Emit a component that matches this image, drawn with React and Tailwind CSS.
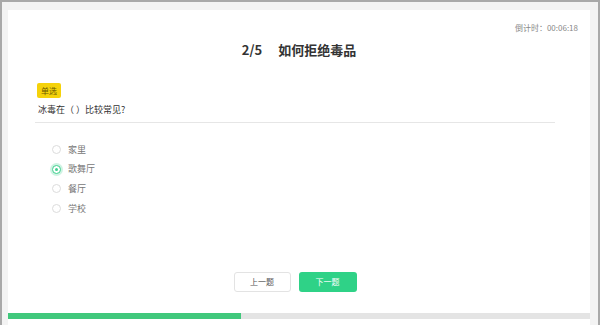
import React from "react";

const font = { fontFamily: '"Noto Sans CJK SC", "Noto Sans", sans-serif' };

function Radio({ checked }) {
  return checked ? (
    <span className="flex h-[9px] w-[9px] items-center justify-center rounded-full border border-[#3fcf8e] bg-white shadow-[0_0_0_2px_rgba(63,207,142,0.25)]">
      <span className="h-[3px] w-[3px] rounded-full bg-[#3fcf8e]" />
    </span>
  ) : (
    <span className="h-[9px] w-[9px] rounded-full border border-[#dcdcdc] bg-white" />
  );
}

export default function App() {
  const options = [
    { label: "家里", checked: false },
    { label: "歌舞厅", checked: true },
    { label: "餐厅", checked: false },
    { label: "学校", checked: false },
  ];
  return (
    <div
      className="h-[325px] w-[600px] overflow-hidden border-x-2 border-t-2 border-[#a9a9a9] bg-[#f3f3f3]"
      style={font}
    >
      <div className="ml-[6px] mt-[8px] flex h-[315px] w-[582px] flex-col bg-white">
        <div className="mt-[12px] flex justify-end pr-[12px] text-[8px] leading-[12px] text-[#888]">
          倒计时：00:06:18
        </div>
        <div className="mt-[7px] flex justify-center text-[13px] font-bold leading-[18px] text-[#333]">
          <span>2/5</span>
          <span className="ml-[16px]">如何拒绝毒品</span>
        </div>
        <div className="ml-[29px] mt-[24px] flex">
          <span className="flex h-[15px] items-center rounded-[2px] bg-[#f5d20a] px-[4px] text-[8px] text-[#6a5a00]">
            单选
          </span>
        </div>
        <div className="ml-[27px] mr-[35px] mt-[5px] border-b border-[#e6e6e6] pb-[5px] pl-[3px] text-[9px] leading-[14px] text-[#333]">
          冰毒在（ ）比较常见?
        </div>
        <div className="ml-[44px] mt-[20px] flex flex-col gap-[6.6px]">
          {options.map((o) => (
            <div key={o.label} className="flex h-[13px] items-center gap-[7px]">
              <Radio checked={o.checked} />
              <span className="text-[9px] text-[#777]">{o.label}</span>
            </div>
          ))}
        </div>
        <div className="mt-[57px] flex justify-center gap-[8px] pr-[8px]">
          <button className="flex h-[20px] w-[57px] items-center justify-center rounded-[3px] border border-[#e3e3e3] bg-white text-[8px] text-[#555]">
            上一题
          </button>
          <button className="flex h-[20px] w-[58px] items-center justify-center rounded-[3px] bg-[#2fd287] text-[8px] text-white">
            下一题
          </button>
        </div>
        <div className="mt-[21px] flex h-[6px] w-full bg-[#e4e4e4]">
          <div className="h-full w-[233px] bg-[#41c87c]" />
        </div>
      </div>
    </div>
  );
}
